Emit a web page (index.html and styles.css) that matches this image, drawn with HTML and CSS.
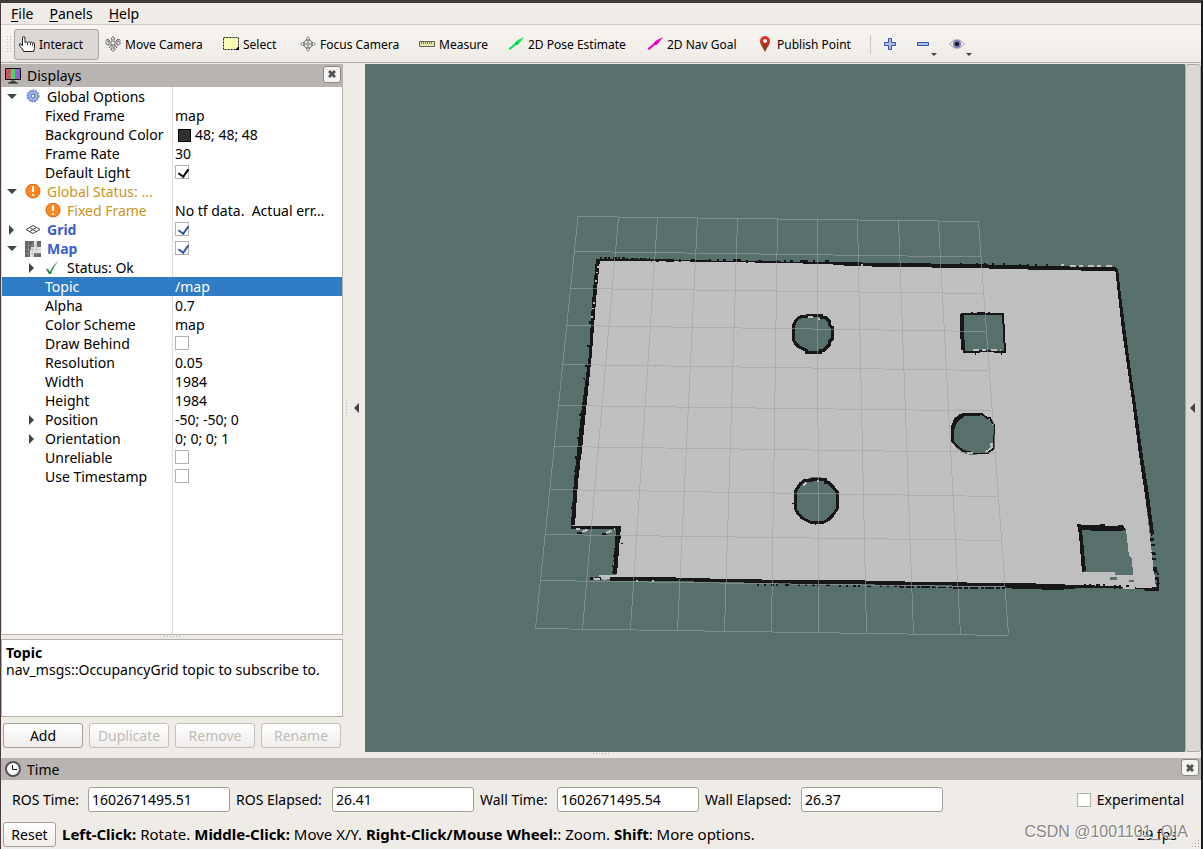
FILE: index.html
```html
<!DOCTYPE html>
<html lang="en">
<head>
    <meta charset="utf-8" />
    <title>RViz</title>
    <link rel="stylesheet" href="styles.css">
</head>
<body>
    <nav class="menubar">
        <a href="#file"><u>F</u>ile</a>
        <a href="#panels"><u>P</u>anels</a>
        <a href="#help"><u>H</u>elp</a>
    </nav>

    <div class="toolbar">
        <span class="grip"></span>
        <div class="tools">
            <button class="tool active">
                <svg width="16" height="16" viewBox="0 0 16 16"><path d="M3.500 10V2q0-1.500 1.200-1.500T6 2v4.500q1-1.500 2.500 0 1.500-1.500 2.700 0 1.300-1 2.300.3 2-.8 2 1.200v4.500l-1 3H4.500L3.500 13 .6 10V8h1.500z" fill="#fff" stroke="#222"/><path d="M8.500 7v2M11.500 7v2M13.500 7.500v2" stroke="#222"/></svg>
                Interact</button>
            <button class="tool">
                <svg width="16" height="16" viewBox="0 0 16 16" fill="#eee" stroke="#666"><path d="M8 .5 10 3H9v3h4V4.500l2.500 2.500L13 9.500V8H9v5h1.500L8 15.500 5.500 13H7V8H3v1.500L.5 7 3 4.500V6h4V3H6z"/><path d="M.5 4.500 3 3l2 2M15.500 4.500 13 3l-2 2M4 12l2-3M12 12l-2-3" fill="none"/></svg>
                Move Camera</button>
            <button class="tool">
                <svg width="16" height="16" viewBox="0 0 16 16"><path d="M.5 1.500h15v12H.5z" fill="#fafcb4" stroke="#222" stroke-dasharray="2 1"/><path d="M16 10v4h-4z" fill="#000"/></svg>
                Select</button>
            <button class="tool">
                <svg width="16" height="16" viewBox="0 0 16 16" fill="none" stroke="#888"><circle cx="8" cy="8" r="4.500" fill="#ddd"/><path d="M8 .5 6.500 2.500v2h3v-2zM8 15.500l-1.500-2v-2h3v2zM.5 8l2-1.500h2v3h-2zM15.500 8l-2-1.500h-2v3h2zM8 5v6M5 8h6"/></svg>
                Focus Camera</button>
            <button class="tool">
                <svg width="16" height="16" viewBox="0 0 16 16"><path d="M.5 5.500h15v5H.5z" fill="#e4e8a8" stroke="#666"/><path d="M2.500 6v2M4.500 6v2M6.500 6v2M8.500 6v2M10.500 6v2M12.500 6v2" stroke="#777"/></svg>
                Measure</button>
            <button class="tool">
                <svg width="16" height="16" viewBox="0 0 16 16"><path d="M.500 12.500 7 7 9 4.500 16 1l-4.500 6L9.500 9 8 9 2 14z" fill="#00f050"/><path d="m8 6 1 2.500" stroke="#08882c"/></svg>
                2D Pose Estimate</button>
            <button class="tool">
                <svg width="16" height="16" viewBox="0 0 16 16"><path d="M.500 12.500 7 7 9 4.500 16 1l-4.500 6L9.500 9 8 9 2 14z" fill="#f000c8"/><path d="m8 6 1 2.500" stroke="#8c0878"/></svg>
                2D Nav Goal</button>
            <button class="tool pin">
                <svg width="10" height="16" viewBox="0 0 10 16"><defs><linearGradient id="pin" x2="0" y2="1"><stop stop-color="#f03434"/><stop offset=".5" stop-color="#b83020"/><stop offset="1" stop-color="#4c4424"/></linearGradient></defs><path d="M5 0a5 5 0 0 1 5 5c0 4-3 6-4 9l-1 2-1-2C3 11 0 9 0 5a5 5 0 0 1 5-5z" fill="url(#pin)"/><circle cx="5" cy="5" r="2" fill="#fff"/></svg>
                Publish Point</button>
        </div>
        <span class="separator"></span>
        <button class="small-tool" aria-label="Add tool">
            <svg width="14" height="16" viewBox="0 0 14 16"><path d="M5.500 2.500h3v4h4v3h-4v4h-3v-4h-4v-3h4z" fill="#a8c0ec" stroke="#3850a4"/></svg>
        </button>
        <button class="small-tool" aria-label="Remove tool">
            <svg width="14" height="16" viewBox="0 0 14 16"><path d="M1.500 6.500h11v3h-11z" fill="#a8c0ec" stroke="#3850a4"/></svg>
            <i class="drop"></i>
        </button>
        <button class="small-tool" aria-label="Visibility">
            <svg width="16" height="16" viewBox="0 0 16 16"><path d="M.5 8q7.500-9 15 0-7.500 9-15 0z" fill="#eee" stroke="#aaa"/><circle cx="8" cy="8" r="4" fill="#7874b8"/><circle cx="8" cy="8" r="2" fill="#111"/></svg>
            <i class="drop"></i>
        </button>
    </div>

    <main class="workspace">
        <section class="displays">
            <header class="dock-title">
                <svg width="16" height="16" viewBox="0 0 16 16"><path d="M1 1h5v10H1z" fill="#c05868"/><path d="M6 1h4v10H6z" fill="#50d468"/><path d="M10 1h5v10h-5z" fill="#9860d0"/><path d="M.5 .5h15v11H.5zM8 12v2M3 15h10M5 14h6" fill="none" stroke="#111"/></svg>
                <h2>Displays</h2>
                <button class="close" aria-label="Close displays"><svg width="8" height="8" viewBox="0 0 8 8"><path d="m1 1 6 6M7 1 1 7" stroke="#555" stroke-width="3"/></svg></button>
            </header>
            <div class="tree">
                <table>
                    <tr><td class="top"><i class="open"></i><svg width="16" height="16" viewBox="0 0 16 16"><circle cx="8" cy="7" r="6" fill="none" stroke="#4c64b4" stroke-dasharray="2 1"/><circle cx="8" cy="7" r="5" fill="#a4b8ec" stroke="#6078c4"/><circle cx="8" cy="7" r="2" fill="#e4ecfc" stroke="#4c64b4"/></svg>Global Options</td><td></td></tr>
                    <tr><td class="leaf">Fixed Frame</td><td>map</td></tr>
                    <tr><td class="leaf">Background Color</td><td><span class="swatch"></span>48; 48; 48</td></tr>
                    <tr><td class="leaf">Frame Rate</td><td>30</td></tr>
                    <tr><td class="leaf"><label for="light">Default Light</label></td><td><input type="checkbox" id="light" checked></td></tr>
                    <tr class="warn"><td class="top"><i class="open"></i><svg width="16" height="16" viewBox="0 0 16 16"><circle cx="8" cy="7" r="7" fill="#ff8820" stroke="#d86008"/><path d="M8 2v6M8 10v2" stroke="#fff" stroke-width="2"/></svg>Global Status: …</td><td></td></tr>
                    <tr class="warn"><td class="child"><svg width="16" height="16" viewBox="0 0 16 16"><circle cx="8" cy="7" r="7" fill="#ff8820" stroke="#d86008"/><path d="M8 2v6M8 10v2" stroke="#fff" stroke-width="2"/></svg>Fixed Frame</td><td>No tf data.&nbsp; Actual err…</td></tr>
                    <tr class="display"><td class="top"><i class="shut"></i><svg width="16" height="16" viewBox="0 0 16 16" fill="none" stroke="#444"><path d="m1 7.500 7-4 7 4-7 4zM4.500 5.500l7 4M11.500 5.500l-7 4"/></svg><label for="grid">Grid</label></td><td><input type="checkbox" id="grid" checked></td></tr>
                    <tr class="display"><td class="top"><i class="open"></i><svg width="16" height="16" viewBox="0 0 16 16"><path d="M0 0h16v16H0z" fill="#e4e4e4"/><path d="M0 0h9v6H6v3H5v7H0zM12 0h4v6h-4zM9 12h7v4H9z" fill="#666"/><path d="M3.500 0v16M7.500 0v16M11.500 0v16M0 4.500h16M0 8.500h16M0 12.500h16" stroke="#aaa" stroke-opacity=".4"/></svg><label for="map">Map</label></td><td><input type="checkbox" id="map" checked></td></tr>
                    <tr><td class="child nested"><i class="shut"></i><svg width="16" height="16" viewBox="0 0 16 16"><path d="M1 9q2-1 4 3Q8 5 13.500 1 8 7 6 14H4z" fill="#108c30"/></svg>Status: Ok</td><td></td></tr>
                    <tr class="selected"><td class="leaf">Topic</td><td>/map</td></tr>
                    <tr><td class="leaf">Alpha</td><td>0.7</td></tr>
                    <tr><td class="leaf">Color Scheme</td><td>map</td></tr>
                    <tr><td class="leaf"><label for="behind">Draw Behind</label></td><td><input type="checkbox" id="behind"></td></tr>
                    <tr><td class="leaf">Resolution</td><td>0.05</td></tr>
                    <tr><td class="leaf">Width</td><td>1984</td></tr>
                    <tr><td class="leaf">Height</td><td>1984</td></tr>
                    <tr><td class="nested"><i class="shut"></i>Position</td><td>-50; -50; 0</td></tr>
                    <tr><td class="nested"><i class="shut"></i>Orientation</td><td>0; 0; 0; 1</td></tr>
                    <tr><td class="leaf"><label for="unreliable">Unreliable</label></td><td><input type="checkbox" id="unreliable"></td></tr>
                    <tr><td class="leaf"><label for="stamp">Use Timestamp</label></td><td><input type="checkbox" id="stamp"></td></tr>
                </table>
            </div>
            <span class="hsplit"></span>
            <div class="description"><b>Topic</b><br>nav_msgs::OccupancyGrid topic to subscribe to.</div>
            <div class="actions">
                <button class="push">Add</button>
                <button class="push" disabled>Duplicate</button>
                <button class="push" disabled>Remove</button>
                <button class="push" disabled>Rename</button>
            </div>
        </section>

        <button class="vsplit" aria-label="Hide left panel"><span class="vgrip"></span><i class="left"></i></button>

        <section class="view">
            <svg viewBox="365 64 820 688" shape-rendering="crispEdges" fill="none">
                <!-- free space -->
                <path fill="#bfbfbf" fill-rule="evenodd" d="M598 260 1116 268 1137 427 1156 588 610 579 599 579V575L616 575 619 529 573 529 584 405z
                    M792 333a20 18 0 0 0 41 0a20 18 0 0 0-41 0z
                    M951 434a21 20 0 0 0 44 0a21 20 0 0 0-44 0z
                    M794 500a21 22 0 0 0 44 0a21 22 0 0 0-44 0z
                    M962 315h42l2 37h-42zM1081 530h45l3 26 3 2 1 17h-18v-3h-31z
                    M1110 577h7v3h-7zM1129 580h5v2h-5z"/>
                <!-- walls -->
                <g fill="#171717">
                    <path d="M596 259h50l84 2 100 1 63 1 75 1 80 2 67 1 3 2-3 2-68-1-77-2-77-1-43-1-23-2-97-2-80-1h-53z"/>
                    <path d="M596 259h4l-4 41-4 53-6 57-4 40-4 32-3 43h-4l3-45 4-38 4-36 7-52 3-52z"/>
                    <path d="M571 526h50l-1 10-3 38h-4l3-45h-45z"/>
                    <path d="M610 577 659 577 727 579 795 580 850 580 880 581 930 582 1003 583 1050 584 1080 585 1110 586 1145 588 1159 587 1159 591 1145 591 1143 589 1118 588 1085 588 1065 589 1063 590 1020 589 1004 588 1004 586 900 585 850 584 795 584 727 582 660 581 610 581z"/>
                    <path d="m1115 267 3 2 3 26 10 77 5 33 6 45 7 45 5 39-3 2-12-81-7-55-10-70z"/>
                    <path d="M1077 524h4v1h18l1-1h5v2h13v-1h5l3 5-6 1h-21l-17-1 4 41-4 1-3-37z"/>
                </g>
                <g stroke="#171717" stroke-width="2">
                    <path d="M802 316h5v-1h14v2h4l4 4v4l3 2v12l-3 3v3l-5 5h-4v2h-14v-2l-7-3-4-4-2-4v-13l4-7z" stroke-width="3"/>
                    <path d="M962 314h41l2 38h-10v-1h-16v1h-15z"/>
                    <path d="M962 314v14l1 22" stroke-width="4"/>
                    <path d="M964 414h18l5 4h3l4 7v23l-6 5h-15l-10-2-7-6-4-4v-14l3-8 5-4z"/>
                    <path d="m980 414-16 1-8 6-4 10v11" stroke-width="3"/>
                    <path d="M805 480h6v-1h14v3h3l5 5 4 5v17l-4 6-5 5-4 2h-14l-8-4-5-6-2-4v-16l5-8z" stroke-width="3"/>
                </g>
                <!-- scan noise along the walls -->
                <g stroke="#171717">
                    <path d="m600 258 50 1" stroke-width="2" stroke-dasharray="2 2 3 1 2 3 4 1"/>
                    <path d="m650 260 180 2" stroke-width="3" stroke-dasharray="2 4 3 7 8 5 2 10 4 14 2 6"/>
                    <path d="m960 264 100 2" stroke-width="3" stroke-dasharray="2 14 2 6 2 6 2 9"/>
                    <path d="m594 285-8 80-10 90-4 60" stroke-width="2" stroke-dasharray="2 34 3 21 2 17 3 11"/>
                    <path d="m619 530-5 43" stroke-width="5" stroke-dasharray="2 3 4 3 1 5"/>
                    <path d="m757 585 145 1" stroke-width="2" stroke-dasharray="2 5 2 5 3 2 2 7 4 9"/>
                    <path d="m900 587 105 1" stroke-width="2" stroke-dasharray="4 2 8 3 3 1 9 2"/>
                    <path d="m1010 584 55 1" stroke-width="2" stroke-dasharray="3 5 6 3 9 2"/>
                    <path d="m1084 586 45 1" stroke-width="4" stroke-dasharray="2 3 2 5 4 3 2 9"/>
                    <path d="m1152 538 3 30 3 18" stroke-width="4" stroke-dasharray="3 3 2 6 3 3 2 7 6 4"/>
                    <path d="m1158 573v16M971 313h23" stroke-width="2" stroke-dasharray="2 4 8 3"/>
                    <path d="M975 353v2M1001 353v2M815 523v2M792 503h2M621 543h2"/>
                    <path d="M590 578h13" stroke-width="3" stroke-dasharray="3 2 2 1"/>
                    <path d="M577 533h6M602 534h5" stroke-width="2"/>
                </g>
                <g stroke="#bfbfbf" stroke-width="2">
                    <path d="m598 266-6 54M581 460l-4 65" stroke-dasharray="2 4 1 7 2 20"/>
                    <path d="M576 529h4M582 532l7-3M606 533l9-4M594 579h14M973 350h28M967 453h9M991 446v-3M1070 266h42" stroke-dasharray="6 3 4 5"/>
                    <path d="M636 581h2M652 581h2M861 265h2M1061 265h3M808 317h5M818 319h2M806 483l-3 3M817 481h2M1123 588h12"/>
                </g>
                <!-- 10 x 10 reference grid -->
                <g stroke="#a0a0a4" stroke-opacity=".55">
                    <path d="M578 216.500 978.500 221.500M574.500 251.500 981 257M570.500 288.500 984 293.500M566.500 325.500 986.500 331.500M562.500 364.500 988.500 370.500M558.500 405.500 991.500 411M554.500 446.500 994.500 452.500M550 489.500 998 496.500M545.500 534.500 1001.500 540.500M540.500 580.500 1005 587M535.500 628.500 1008.500 635.500"/>
                    <path d="M578 216.500 535.500 628.500M618.500 217 582.500 629M657.500 217.500 630.500 629.500M697.500 218 677.500 630.500M737.500 218.500 724.500 631M777.500 219 771.500 631.500M817.500 219 818.500 632M857.500 219.500 866.500 633M898.500 220 913.500 634M938.500 221 960.500 634.500M978.500 221.500 1008.500 635"/>
                </g>
            </svg>
        </section>
        <button class="right-bar" aria-label="Show right panel"><i class="left"></i></button>
    </main>

    <span class="hsplit wide"></span>

    <section class="time">
        <header class="dock-title">
            <svg width="16" height="16" viewBox="0 0 16 16"><circle cx="8" cy="8" r="7" fill="#fff" stroke="#555" stroke-width="2"/><path d="M7.500 4v4.500H12" fill="none" stroke="#111"/></svg>
            <h2>Time</h2>
            <button class="close" aria-label="Close time"><svg width="8" height="8" viewBox="0 0 8 8"><path d="m1 1 6 6M7 1 1 7" stroke="#555" stroke-width="3"/></svg></button>
        </header>
        <div class="clocks">
            <label for="rostime">ROS Time:</label><input type="text" id="rostime" value="1602671495.51">
            <label for="roselapsed">ROS Elapsed:</label><input type="text" id="roselapsed" value="26.41">
            <label for="walltime">Wall Time:</label><input type="text" id="walltime" value="1602671495.54">
            <label for="wallelapsed">Wall Elapsed:</label><input type="text" id="wallelapsed" value="26.37">
            <label class="experimental"><input type="checkbox">Experimental</label>
        </div>
    </section>

    <footer class="status">
        <button class="push">Reset</button>
        <p><b>Left-Click:</b> Rotate. <b>Middle-Click:</b> Move X/Y. <b>Right-Click/Mouse Wheel:</b>: Zoom. <b>Shift</b>: More options.</p>
        <span class="fps">29 fps</span>
        <span class="watermark">CSDN @1001101_QIA</span>
    </footer>
</body>
</html>
```
FILE: styles.css
```css
*{
    box-sizing:border-box;
    margin:0;
    padding:0;
}
body{
    height:100vh;
    display:flex;
    flex-direction:column;
    overflow:hidden;
    background:#efebe7;
    border-top:3px solid #3c3b37;
    border-left:1px solid #4c3c40;
    border-right:2px solid #1c1c1c;
    font-family:"Noto Sans", sans-serif;
    font-size:14px;
    line-height:19px;
    color:#000;
}
button, input{
    font:inherit;
    color:inherit;
}
button{
    background:none;
    border:none;
}
svg{
    flex:none;
    display:block;
}

/* menu and toolbar */
.menubar{
    display:flex;
    gap:16px;
    height:22px;
    padding:1px 10px;
    border-bottom:1px solid #d0ccc8;
}
.menubar a{
    color:#000;
    text-decoration:none;
}
.menubar u{
    text-underline-offset:2px;
}
.toolbar{
    display:flex;
    align-items:center;
    height:38px;
    padding:1px 0 0 5px;
    background:linear-gradient(#f8f5f1, #efebe7);
    border-bottom:1px solid #b0aca8;
    font-size:12px;
}
.grip{
    width:6px;
    height:18px;
    margin-right:2px;
    background:radial-gradient(#bbb 30%, transparent 30%) 0 0/3px 3px;
}
.tools{
    display:grid;
    grid-template-columns:86px 118px 77px 119px 89px 139px 113px 104px;
    align-items:center;
}
.tool{
    display:flex;
    align-items:center;
    gap:4px;
    height:31px;
    padding-left:5px;
    white-space:nowrap;
}
.tool.active{
    width:85px;
    background:#dcd8d5;
    border:1px solid #a8a4a0;
    border-radius:3px;
    padding-left:4px;
}
.tool.pin{
    gap:7px;
}
.separator{
    width:1px;
    height:19px;
    margin:0 12px 0 11px;
    background:#ccc8c4;
}
.small-tool{
    position:relative;
    height:28px;
    margin-right:19px;
}
.drop{
    position:absolute;
    right:-7px;
    bottom:2px;
    border:3px solid transparent;
    border-top-color:#444;
    border-bottom:none;
}

/* docks */
.workspace{
    flex:1;
    min-height:0;
    display:flex;
    margin-top:1px;
}
.displays{
    width:342px;
    display:flex;
    flex-direction:column;
}
.dock-title{
    display:flex;
    align-items:center;
    height:23px;
    padding:0 2px 0 4px;
    background:#b8b4b1;
}
.dock-title h2{
    flex:1;
    margin-left:6px;
    font-size:14px;
    font-weight:normal;
}
.close{
    display:flex;
    align-items:center;
    justify-content:center;
    width:18px;
    height:17px;
    margin-bottom:3px;
    background:#f6f4f2;
    border:1px solid #8c8884;
    border-radius:3px;
}
.tree{
    flex:1;
    min-height:0;
    overflow:hidden;
    background:linear-gradient(#dcdcdc, #dcdcdc) 170px 0/1px 100% no-repeat #fff;
    border:1px solid #b4b0ac;
    border-top:none;
    border-left-color:#dcd8d4;
}
.tree table{
    width:100%;
    table-layout:fixed;
    border-collapse:collapse;
}
.tree td{
    position:relative;
    height:19px;
    padding-left:3px;
    line-height:19px;
    white-space:nowrap;
}
.tree td:first-child{
    width:170px;
}
.tree td svg{
    display:inline-block;
    margin-right:6px;
    vertical-align:-3px;
}
.tree td.top{
    padding-left:23px;
}
.tree td.leaf, .tree td.child, .tree td.nested{
    padding-left:43px;
}
.open, .shut{
    position:absolute;
    left:5px;
    top:7px;
    border:5px solid transparent;
    border-top-color:#444;
    border-bottom:none;
}
.shut{
    left:7px;
    top:5px;
    border:5px solid transparent;
    border-left-color:#444;
    border-right:none;
}
.nested .shut{
    left:27px;
}
.warn td:first-child{
    color:#cc9420;
}
.display td:first-child{
    color:#3860c8;
    font-weight:bold;
}
.selected{
    background:#307cc4;
    color:#fff;
}
.swatch{
    display:inline-block;
    width:13px;
    height:13px;
    margin:0 4px 0 3px;
    vertical-align:-2px;
    background:#303030;
    border:1px solid #000;
}
input[type=checkbox]{
    appearance:none;
    width:14px;
    height:14px;
    background:#fff;
    border:1px solid #b4b0ac;
}
.tree input[type=checkbox]{
    display:block;
    margin-bottom:2px;
}
input[type=checkbox]:checked{
    position:relative;
    color:#000;
}
input[type=checkbox]:checked::after{
    content:"";
    position:absolute;
    left:4px;
    top:1px;
    width:5px;
    height:8px;
    border:solid;
    border-width:0 2px 2px 0;
    transform:rotate(35deg);
}
.display input[type=checkbox]:checked{
    color:#3058a8;
}
.hsplit{
    height:4px;
    flex:none;
    background:linear-gradient(90deg, #aaa 1px, transparent 1px) 0 1px/3px 1px repeat-x;
    align-self:center;
    width:17px;
}
.hsplit.wide{
    height:6px;
}
.description{
    height:78px;
    padding:4px;
    background:#fff;
    border:1px solid #b4b0ac;
    line-height:17px;
}
.actions{
    display:grid;
    grid-template-columns:repeat(4, 1fr);
    gap:6px;
    padding:6px 2px 4px;
}
.push{
    height:25px;
    background:linear-gradient(#fff, #efedeb);
    border:1px solid #a4a09c;
    border-radius:3px;
}
.push:disabled{
    color:#c0bcb8;
    border-color:#c4c0bc;
}
.vsplit{
    display:flex;
    align-items:center;
    width:22px;
    padding-left:2px;
}
.vgrip{
    width:3px;
    height:18px;
    margin-right:6px;
    background:radial-gradient(#bbb 30%, transparent 30%) 0 0/3px 3px;
}
.left{
    border:5px solid transparent;
    border-right-color:#444;
    border-left:none;
}
.view{
    flex:1;
    min-width:0;
    background:#58706c;
}
.view svg{
    width:100%;
    height:100%;
}
.right-bar{
    display:flex;
    align-items:center;
    width:16px;
    padding-left:4px;
    background:#dcd8d5;
    border:1px solid #aca8a4;
    border-radius:3px;
}

/* time panel */
.time .dock-title{
    height:22px;
}
.clocks{
    display:grid;
    grid-template-columns:70px 142px 90px 142px 71px 142px 90px 142px 1fr;
    align-items:center;
    gap:6px;
    padding:7px 17px 7px 11px;
    white-space:nowrap;
}
.clocks input[type=text]{
    width:100%;
    height:25px;
    padding:0 3px;
    background:#fff;
    border:1px solid #a4a09c;
    border-radius:3px;
}
.experimental{
    display:flex;
    align-items:center;
    justify-content:flex-end;
    gap:6px;
}
.status{
    position:relative;
    display:flex;
    align-items:center;
    gap:6px;
    height:30px;
    padding:0 24px 0 2px;
}
.status p{
    font-size:15px;
}
.status .push{
    width:53px;
}
.fps{
    margin-left:auto;
}
.watermark{
    position:absolute;
    right:13px;
    top:3px;
    font-family:"Liberation Sans", sans-serif;
    font-size:16px;
    color:#888;
    text-shadow:1px 1px #fff;
}
.status::after{
    content:"";
    position:absolute;
    right:1px;
    bottom:1px;
    width:12px;
    height:12px;
    background:radial-gradient(#aaa 30%, transparent 30%) 0 0/3px 3px;
    clip-path:polygon(100% 0, 100% 100%, 0 100%);
}
```
